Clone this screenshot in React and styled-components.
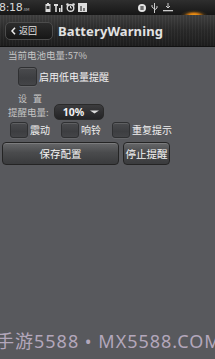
import React from "react";
import styled, { createGlobalStyle } from "styled-components";

const Global = createGlobalStyle`
  html, body { margin: 0; padding: 0; background: #58595d; }
  body { font-family: "Noto Sans", "Noto Sans CJK SC", sans-serif; }
`;

const Screen = styled.div`
  position: relative;
  width: 215px;
  height: 359px;
  overflow: hidden;
  display: flex;
  flex-direction: column;
  background: #58595d;
  font-family: "Noto Sans", "Noto Sans CJK SC", sans-serif;
`;

const StatusBar = styled.div`
  position: relative;
  height: 15px;
  display: flex;
  align-items: center;
  background: linear-gradient(#2e2e2e, #161616);
  color: #cfcfcf;
  overflow: hidden;
`;

const Time = styled.span`
  font-size: 11px;
  line-height: 1;
  letter-spacing: -0.3px;
  margin-left: -1px;
  color: #d8d8d8;
  font-family: "DejaVu Sans", sans-serif;
  & small { font-size: 4px; color: #aaa; margin-left: 1px; }
`;

const IconGroup = styled.div`
  display: flex;
  align-items: center;
  gap: ${(p) => p.$gap || 3}px;
  margin-left: ${(p) => p.$ml}px;
`;

const Glow = styled.div`
  position: absolute;
  right: 2px;
  top: 0;
  width: 38px;
  height: 22px;
  background: radial-gradient(ellipse 14px 6px at 50% 72%, #ffb020 0%, #d47a10 40%, rgba(120,80,20,0.3) 75%, rgba(0,0,0,0) 100%);
`;

const TitleBar = styled.div`
  height: 31px;
  display: flex;
  align-items: center;
  padding-left: 5px;
  background:
    repeating-linear-gradient(90deg, rgba(255,255,255,0.03) 0 1px, rgba(0,0,0,0.04) 1px 3px),
    linear-gradient(#404040, #2a2a2a 50%, #1d1d1d);
  border-bottom: 1px solid #111;
`;

const BackButton = styled.div`
  width: 48px;
  height: 18px;
  box-sizing: border-box;
  border-radius: 5px;
  border: 1px solid #4c4c4c;
  background: linear-gradient(#2c2c2c, #161616);
  display: flex;
  align-items: center;
  gap: 3px;
  padding-left: 5px;
  color: #e6e6e6;
  font-size: 9px;
  font-family: "Noto Sans CJK SC", sans-serif;
`;

const Title = styled.div`
  margin-left: 5px;
  color: #e2e2e2;
  font-weight: 700;
  font-size: 13px;
  letter-spacing: 0.1px;
  font-family: "Noto Sans", sans-serif;
`;

const Content = styled.div`
  display: flex;
  flex-direction: column;
  padding: 2px 0 0 0;
  font-family: "Noto Sans CJK SC", sans-serif;
`;

const InfoText = styled.div`
  margin-left: ${(p) => (p.$ml === undefined ? 8 : p.$ml)}px;
  font-size: 9.5px;
  line-height: 12px;
  color: #c4c4c4;
`;

const Row = styled.div`
  display: flex;
  align-items: center;
  margin-left: ${(p) => p.$ml || 0}px;
  margin-top: ${(p) => p.$mt || 0}px;
  gap: ${(p) => p.$gap || 0}px;
`;

const Box = styled.div`
  width: ${(p) => p.$w}px;
  height: ${(p) => p.$h}px;
  box-sizing: border-box;
  border-radius: 3px;
  border: 1px solid #2f3032;
  background: linear-gradient(#4a4b4e, #3d3e41 60%, #444548);
  box-shadow: inset 0 1px 0 rgba(255,255,255,0.12), 0 1px 0 rgba(255,255,255,0.08);
`;

const Label = styled.span`
  color: #f0f0f0;
  font-size: 10px;
  margin-left: ${(p) => p.$ml || 1}px;
  line-height: 1;
`;

const Section = styled.div`
  margin-left: 18px;
  margin-top: 8px;
  font-size: 9px;
  color: #c4c4c4;
  letter-spacing: 2px;
  line-height: 10px;
`;

const Spinner = styled.div`
  width: 50px;
  height: 16px;
  box-sizing: border-box;
  border-radius: 5px;
  border: 1px solid #2a2a2a;
  background: linear-gradient(#3c3c3e, #232325);
  display: flex;
  align-items: center;
  padding-left: 8px;
  gap: 6px;
  color: #f2f2f2;
  font-size: 10.5px;
  font-weight: 700;
  font-family: "Noto Sans", sans-serif;
`;

const Button = styled.div`
  width: ${(p) => p.$w}px;
  height: 23px;
  box-sizing: border-box;
  border-radius: 4px;
  border: 1px solid #242424;
  background: linear-gradient(#666769, #4a4b4d 45%, #3a3b3d);
  box-shadow: inset 0 1px 0 rgba(255,255,255,0.15);
  display: flex;
  align-items: center;
  justify-content: center;
  color: #f4f4f4;
  font-size: 10.5px;
  white-space: nowrap;
`;

const Watermark = styled.div`
  position: absolute;
  left: -4px;
  top: 327px;
  white-space: nowrap;
  font-family: "Noto Sans", "Noto Sans CJK SC", sans-serif;
  font-size: 18px;
  letter-spacing: 1px;
  color: #b3a7bb;
`;

const Icon = ({ children, w = 9, h = 9 }) => (
  <svg width={w} height={h} viewBox={`0 0 ${w} ${h}`}>{children}</svg>
);

export default function App() {
  return (
    <Screen>
      <Global />
      <StatusBar>
        <Time>8:18<small>AM</small></Time>
        <IconGroup $ml={16}>
          <Icon w={6} h={9}>
            <rect x="0.5" y="1" width="5" height="8" fill="#ddd" />
            <rect x="2" y="0" width="2" height="1" fill="#ddd" />
            <rect x="1.5" y="3" width="3" height="3" fill="#333" />
          </Icon>
          <Icon w={9} h={9}>
            <rect x="0" y="1" width="4" height="2" fill="#ddd" />
            <rect x="1.2" y="1" width="1.6" height="8" fill="#ddd" />
            <rect x="5" y="5" width="1.5" height="4" fill="#ddd" />
            <rect x="7" y="2" width="1.5" height="7" fill="#ddd" />
          </Icon>
          <Icon w={9} h={9}>
            <circle cx="4.5" cy="5" r="3.3" fill="none" stroke="#ddd" strokeWidth="1.4" />
            <circle cx="1.5" cy="1.5" r="1.3" fill="#ddd" />
            <circle cx="7.5" cy="1.5" r="1.3" fill="#ddd" />
            <path d="M4.5 3 V5 H6" stroke="#ddd" strokeWidth="1" fill="none" />
          </Icon>
          <Icon w={9} h={9}>
            <rect x="0" y="0" width="9" height="9" fill="#ddd" />
            <rect x="2" y="3" width="2" height="5" fill="#777" />
            <rect x="5" y="5" width="2" height="3" fill="#777" />
          </Icon>
        </IconGroup>
        <IconGroup $ml={51} $gap={5}>
          <Icon w={8} h={8}>
            <circle cx="4" cy="4" r="4" fill="#e4e4e4" />
            <rect x="2.6" y="2" width="1" height="4" fill="#222" />
            <rect x="4.4" y="2" width="1" height="4" fill="#222" />
          </Icon>
          <Icon w={7} h={10}>
            <path d="M3.5 0 V10 M3.5 6 L1 4 V2 M3.5 7 L6 5 V3" stroke="#ccc" strokeWidth="1" fill="none" />
          </Icon>
          <Icon w={10} h={9}>
            <path d="M5 0 V5 M3 3 L5 5 L7 3" stroke="#ccc" strokeWidth="1" fill="none" />
            <rect x="0" y="7" width="10" height="1.3" fill="#ccc" />
          </Icon>
        </IconGroup>
        <Glow />
      </StatusBar>
      <TitleBar>
        <BackButton>
          <svg width="5" height="8" viewBox="0 0 5 8">
            <path d="M4 0.8 L1 4 L4 7.2" stroke="#eee" strokeWidth="1.5" fill="none" />
          </svg>
          <span>返回</span>
        </BackButton>
        <Title>BatteryWarning</Title>
      </TitleBar>
      <Content>
        <InfoText>当前电池电量:57%</InfoText>
        <Row $ml={18} $mt={6}>
          <Box $w={19} $h={19} />
          <Label $ml={2}>启用低电量提醒</Label>
        </Row>
        <Section>设 置</Section>
        <Row $ml={8} $mt={0}>
          <InfoText as="span" $ml={0}>提醒电量:</InfoText>
          <Row $ml={5}>
            <Spinner>
              <span>10%</span>
              <svg width="9" height="4" viewBox="0 0 9 4">
                <path d="M0 0.5 H9 L4.5 3.5 Z" fill="#ddd" />
              </svg>
            </Spinner>
          </Row>
        </Row>
        <Row $ml={10} $mt={2}>
          <Box $w={18} $h={16} />
          <Label $ml={2}>震动</Label>
          <Row $ml={11}>
            <Box $w={18} $h={16} />
            <Label $ml={2}>响铃</Label>
          </Row>
          <Row $ml={11}>
            <Box $w={18} $h={16} />
            <Label $ml={2}>重复提示</Label>
          </Row>
        </Row>
        <Row $ml={2} $mt={4} $gap={4}>
          <Button $w={117}>保存配置</Button>
          <Button $w={47}>停止提醒</Button>
        </Row>
      </Content>
      <Watermark>手游5588 • MX5588.COM</Watermark>
    </Screen>
  );
}
